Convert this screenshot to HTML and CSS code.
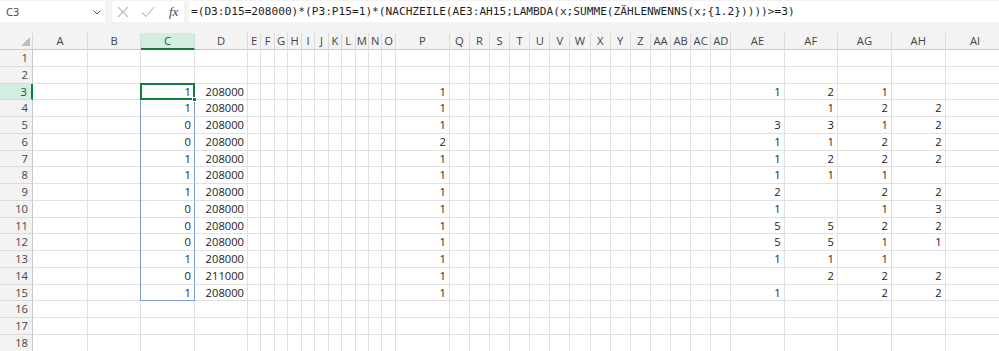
FILE: index.html
```html
<!DOCTYPE html>
<html>
<head>
	<meta charset="utf-8">
	<title>Mappe1 - Excel</title>
	<link rel="stylesheet" href="styles.css">
</head>
<body>
	<div class = "topbar">
		<div class = "namebox">
			<span>C3</span>
			<svg class = "chev" width="8" height="5" viewBox="0 0 8 5"><path d="M0.5 0.5 L4 4 L7.5 0.5" fill="none" stroke="#555" stroke-width="1"/></svg>
		</div>
		<div class = "fxbox">
			<svg width="12" height="12" viewBox="0 0 12 12"><path d="M1 1 L11 11 M11 1 L1 11" stroke="#bcbcbc" stroke-width="1.1" fill="none"/></svg>
			<svg width="14" height="12" viewBox="0 0 14 12"><path d="M1 6.5 L5 10.5 L13 1" stroke="#bcbcbc" stroke-width="1.1" fill="none"/></svg>
			<span class = "fx">fx</span>
		</div>
		<div class = "formula">=(D3:D15=208000)*(P3:P15=1)*(NACHZEILE(AE3:AH15;LAMBDA(x;SUMME(ZÄHLENWENNS(x;{1.2}))))&gt;=3)</div>
	</div>

	<div id = "sheet" class = "sheet"></div>

<script type="text/javascript">
	const letters = ["A","B","C","D","E","F","G","H","I","J","K","L","M","N","O","P","Q","R","S","T","U","V","W","X","Y","Z","AA","AB","AC","AD","AE","AF","AG","AH","AI"]

	const cVals = [1,1,0,0,1,1,1,0,0,0,1,0,1]
	const pVals = [1,1,1,2,1,1,1,1,1,1,1,1,1]
	const ae = [
		[1,2,1,""],
		["",1,2,2],
		[3,3,1,2],
		[1,1,2,2],
		[1,2,2,2],
		[1,1,1,""],
		[2,"",2,2],
		[1,"",1,3],
		[5,5,2,2],
		[5,5,1,1],
		[1,1,1,""],
		["",2,2,2],
		[1,"",2,2],
	]

	const data = {}
	for(let r = 3; r <= 15; r++){
		let i = r - 3
		data[r] = {
			C: cVals[i],
			D: r == 14 ? 211000 : 208000,
			P: pVals[i],
			AE: ae[i][0], AF: ae[i][1], AG: ae[i][2], AH: ae[i][3]
		}
	}

	const sheet = document.getElementById("sheet")

	const corner = document.createElement("div")
	corner.className = "corner"
	sheet.appendChild(corner)

	letters.forEach(l => {
		let h = document.createElement("div")
		h.className = "colhead" + (l == "C" ? " sel" : "")
		h.innerText = l
		sheet.appendChild(h)
	})

	for(let r = 1; r <= 18; r++){
		let rh = document.createElement("div")
		rh.className = "rowhead" + (r == 3 ? " sel" : "")
		rh.innerText = r
		sheet.appendChild(rh)

		letters.forEach(l => {
			let c = document.createElement("div")
			c.className = "cell"
			if(l == "C" && r >= 3 && r <= 15){
				c.className += r == 3 ? " active" : " spill"
				if(r == 15) c.className += " spillend"
			}
			let v = data[r] ? data[r][l] : undefined
			if(v !== undefined) c.innerText = v
			if(r == 3 && l == "C"){
				let handle = document.createElement("span")
				handle.className = "handle"
				c.appendChild(handle)
			}
			sheet.appendChild(c)
		})
	}
</script>
</body>
</html>
```

FILE: styles.css
```css
*{
	margin:0;
	padding:0;
	box-sizing:border-box;
}

body{
	width:999px;
	height:351px;
	overflow:hidden;
	background:#f3f3f3;
	font-family:"Open Sans", sans-serif;
	color:#222;
}

.topbar{
	display:flex;
	height:33px;
	padding-top:1px;
	background:#f3f3f3;
}

.namebox{
	width:105px;
	height:21px;
	background:white;
	display:flex;
	align-items:center;
	justify-content:space-between;
	padding:0 4px 0 6px;
	font-size:11px;
	color:#444;
}

.namebox .chev{
	margin-top:1px;
}

.fxbox{
	width:72px;
	height:21px;
	margin-left:7px;
	background:white;
	display:flex;
	align-items:center;
	padding-left:5px;
	gap:12px;
}

.fxbox .fx{
	font-family:"Liberation Serif", serif;
	font-style:italic;
	font-size:13px;
	color:#444;
	margin-left:2px;
}

.formula{
	flex:1;
	height:21px;
	margin-left:5px;
	background:white;
	padding-left:2px;
	font-family:"DejaVu Sans Mono", monospace;
	font-size:11.15px;
	line-height:21px;
	color:#1e1e1e;
	white-space:nowrap;
}

.sheet{
	display:grid;
	grid-template-columns:33px 55px 53px 54px 53px repeat(11, 13.45px) 54px repeat(14, 20.12px) 53.3px 53.3px 54px 53.7px 60px;
	grid-template-rows:17px repeat(18, 16.75px);
	background:white;
	font-size:11.2px;
}

.corner{
	background:#f3f3f3;
	border-right:1px solid #d6d6d6;
	border-bottom:1px solid #c9c9c9;
	position:relative;
}

.corner::after{
	content:"";
	position:absolute;
	right:2px;
	bottom:3px;
	border-left:9px solid transparent;
	border-bottom:9px solid #bdbdbd;
}

.colhead{
	background:#f3f3f3;
	border-right:1px solid #dadada;
	border-bottom:1px solid #c9c9c9;
	text-align:center;
	line-height:16px;
	color:#444;
	overflow:hidden;
}

.colhead.sel{
	background:#d3ede0;
	border-bottom:2px solid #107c41;
	color:#0e5a2f;
}

.rowhead{
	background:#f3f3f3;
	border-right:1px solid #c9c9c9;
	border-bottom:1px solid #dadada;
	text-align:right;
	padding-right:4px;
	line-height:16px;
	color:#444;
}

.rowhead.sel{
	background:#d3ede0;
	border-right:2px solid #107c41;
	color:#0e5a2f;
}

.cell{
	border-right:1px solid #e1e1e1;
	border-bottom:1px solid #e1e1e1;
	text-align:right;
	padding-right:3px;
	line-height:16px;
	white-space:nowrap;
	position:relative;
}

.cell.spill{
	border-right-color:#7b9de0;
	box-shadow:-1px 0 0 #7b9de0;
}

.cell.spillend{
	border-bottom-color:#7b9de0;
}

.cell.active::after{
	content:"";
	position:absolute;
	left:-1px;
	top:-1px;
	right:-1px;
	bottom:-1px;
	border:2px solid #107c41;
}

.handle{
	position:absolute;
	right:-3px;
	bottom:-3px;
	width:5px;
	height:5px;
	background:#107c41;
	border:1px solid white;
	z-index:2;
}
```
